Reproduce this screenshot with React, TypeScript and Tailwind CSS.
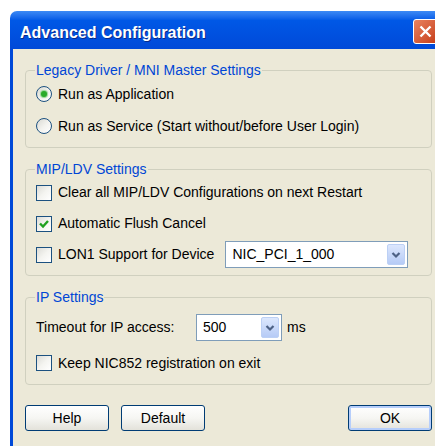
import React, { useState } from 'react';

const FONT = "font-['Liberation_Sans',Arial,sans-serif]";

interface GroupBoxProps {
  title: string;
  className?: string;
  children: React.ReactNode;
}

const GroupBox: React.FC<GroupBoxProps> = ({ title, className = '', children }) => (
  <fieldset className={`border border-[#d0d0bf] rounded-[4px] px-[10px] ${className}`}>
    <legend className="ml-[-1px] px-[1px] text-[14px] leading-[16px] text-[#0046d5]">{title}</legend>
    {children}
  </fieldset>
);

const Radio: React.FC<{ checked: boolean; label: string; onSelect: () => void }> = ({ checked, label, onSelect }) => (
  <div className="h-[32px] flex items-center gap-[6px] cursor-default" onClick={onSelect}>
    <span className="w-4 h-4 rounded-full border border-[#1c5180] bg-linear-to-br from-[#d8d8d2] via-[#f2f2ee] to-white flex items-center justify-center">
      {checked && <span className="w-[6px] h-[6px] rounded-full bg-[#2aab2a] shadow-[0_0_1px_1px_#8fd68f]" />}
    </span>
    <span>{label}</span>
  </div>
);

const CheckBox: React.FC<{ checked: boolean; label: string; onToggle: () => void }> = ({ checked, label, onToggle }) => (
  <div className="flex items-center gap-[6px] cursor-default" onClick={onToggle}>
    <span className="w-4 h-4 border border-[#1c5180] bg-linear-to-br from-[#dcdcd7] via-[#f4f4f0] to-white flex items-center justify-center">
      {checked && (
        <svg width="12" height="12" viewBox="0 0 12 12">
          <path d="M2 5.5 L5 8.5 L10 3" fill="none" stroke="#21a121" strokeWidth="2.4" />
        </svg>
      )}
    </span>
    <span>{label}</span>
  </div>
);

const Chevron = () => (
  <svg width="10" height="8" viewBox="0 0 10 8">
    <path d="M1.5 2 L5 5.5 L8.5 2" fill="none" stroke="#4d6185" strokeWidth="2.2" />
  </svg>
);

const Combo: React.FC<{ value: string; className?: string }> = ({ value, className = '' }) => (
  <div className={`h-[27px] border border-[#7f9db9] bg-white flex items-center pl-[6px] pr-[2px] ${className}`}>
    <span className="flex-1">{value}</span>
    <span className="w-[18px] h-[21px] rounded-[2px] border border-[#bcd0f5] bg-linear-to-b from-[#dce7fd] to-[#b6cbf6] flex items-center justify-center">
      <Chevron />
    </span>
  </div>
);

const XpButton: React.FC<{ label: string; isDefault?: boolean }> = ({ label, isDefault }) => (
  <button
    className={`w-[84px] h-[26px] rounded-[3px] border border-[#003c74] bg-linear-to-b from-white via-[#f6f6f3] to-[#e3e2da] text-[14px] ${
      isDefault ? 'shadow-[inset_0_0_0_2px_#b6cefb]' : ''
    }`}
  >
    {label}
  </button>
);

export default function App() {
  const [runMode, setRunMode] = useState<'app' | 'service'>('app');
  const [clearCfg, setClearCfg] = useState(false);
  const [autoFlush, setAutoFlush] = useState(true);
  const [lonSupport, setLonSupport] = useState(false);
  const [keepReg, setKeepReg] = useState(false);

  return (
    <div className={`w-[435px] h-[446px] overflow-hidden bg-white ${FONT}`}>
      <div className="ml-[10px] mt-[11px] w-[440px] h-[460px] flex flex-col rounded-tl-[7px] overflow-hidden">
        {/* title bar */}
        <div className="h-[38px] shrink-0 flex items-center justify-between pl-[10px] pt-[6px] bg-linear-to-b from-[#3d8af5] via-[#0058e6] via-25% to-[#0049d8]">
          <span className="text-[16px] font-bold text-white leading-[18px] [text-shadow:1px_1px_0_#0a2a8a]">
            Advanced Configuration
          </span>
          <span className="mr-[12px] mb-[4px] w-[25px] h-[25px] rounded-[3px] border border-white bg-linear-to-br from-[#e9825f] to-[#c53b14] flex items-center justify-center">
            <svg width="15" height="15" viewBox="0 0 15 15">
              <path d="M2.5 2.5 L12.5 12.5 M12.5 2.5 L2.5 12.5" stroke="white" strokeWidth="2.4" />
            </svg>
          </span>
        </div>

        {/* body */}
        <div className="flex-1 border-l-[3px] border-[#0049d8] bg-[#ece9d8] text-[14px] text-black pl-[12px] pr-[18px] pt-[13px]">
          <GroupBox title="Legacy Driver / MNI Master Settings" className="pb-[5px]">
            <Radio checked={runMode === 'app'} label="Run as Application" onSelect={() => setRunMode('app')} />
            <Radio
              checked={runMode === 'service'}
              label="Run as Service (Start without/before User Login)"
              onSelect={() => setRunMode('service')}
            />
          </GroupBox>

          <GroupBox title="MIP/LDV Settings" className="mt-[13px] pb-[5px]">
            <div className="h-[31px] flex items-center">
              <CheckBox checked={clearCfg} label="Clear all MIP/LDV Configurations on next Restart" onToggle={() => setClearCfg(v => !v)} />
            </div>
            <div className="h-[31px] flex items-center">
              <CheckBox checked={autoFlush} label="Automatic Flush Cancel" onToggle={() => setAutoFlush(v => !v)} />
            </div>
            <div className="h-[31px] flex items-center">
              <CheckBox checked={lonSupport} label="LON1 Support for Device" onToggle={() => setLonSupport(v => !v)} />
              <Combo value="NIC_PCI_1_000" className="ml-[11px] w-[183px]" />
            </div>
          </GroupBox>

          <GroupBox title="IP Settings" className="mt-[13px] pb-[11px]">
            <div className="mt-[9px] h-[27px] flex items-center">
              <span className="w-[160px]">Timeout for IP access:</span>
              <Combo value="500" className="w-[86px]" />
              <span className="ml-[5px]">ms</span>
            </div>
            <div className="mt-[12px] h-[20px] flex items-center">
              <CheckBox checked={keepReg} label="Keep NIC852 registration on exit" onToggle={() => setKeepReg(v => !v)} />
            </div>
          </GroupBox>

          <div className="mt-[20px] flex items-center">
            <XpButton label="Help" />
            <span className="ml-[12px]">
              <XpButton label="Default" />
            </span>
            <span className="ml-auto">
              <XpButton label="OK" isDefault />
            </span>
          </div>
        </div>
      </div>
    </div>
  );
}
